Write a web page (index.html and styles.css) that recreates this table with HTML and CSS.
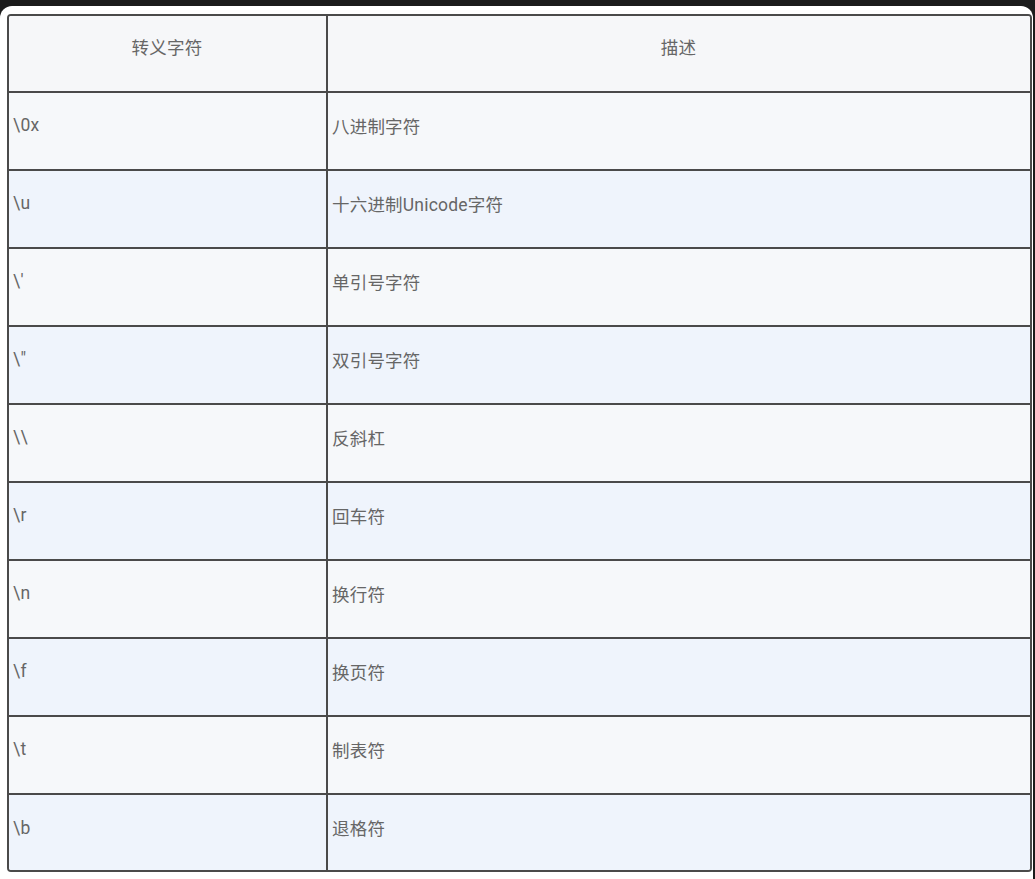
FILE: index.html
```html
<!DOCTYPE html>
<html lang="zh-CN">
<head>
<meta charset="utf-8">
<link rel="stylesheet" href="styles.css">
</head>
<body>
<div class="card">
  <table class="esc">
    <thead>
      <tr><th class="c1">转义字符</th><th class="c2">描述</th></tr>
    </thead>
    <tbody>
      <tr><td>\0x</td><td>八进制字符</td></tr>
      <tr><td>\u</td><td>十六进制Unicode字符</td></tr>
      <tr><td>\'</td><td>单引号字符</td></tr>
      <tr><td>\"</td><td>双引号字符</td></tr>
      <tr><td>\\</td><td>反斜杠</td></tr>
      <tr><td>\r</td><td>回车符</td></tr>
      <tr><td>\n</td><td>换行符</td></tr>
      <tr><td>\f</td><td>换页符</td></tr>
      <tr><td>\t</td><td>制表符</td></tr>
      <tr><td>\b</td><td>退格符</td></tr>
    </tbody>
  </table>
</div>
</body>
</html>
```

FILE: styles.css
```css
html, body {
  margin: 0;
  padding: 0;
  background: #1b1b1b;
}
body {
  padding-top: 6px;
  font-family: Roboto, "Noto Sans CJK SC", sans-serif;
  font-size: 17.5px;
  color: #666;
}
.card {
  background: #fff;
  border-radius: 12px;
  margin-right: 2px;
  height: 885px;
  padding: 8px 0 0 7px;
  box-sizing: border-box;
}
.esc {
  width: 1025px;
  border-collapse: separate;
  border-spacing: 0;
  border: 2px solid #4a4a4a;
  border-radius: 4px;
  overflow: hidden;
}
.esc th, .esc td {
  height: 78px;
  box-sizing: border-box;
  padding: 0 5px 12px 4px;
  vertical-align: middle;
  font-weight: normal;
  border-bottom: 2px solid #4a4a4a;
  text-align: left;
  letter-spacing: 0.2px;
}
.esc tr > :first-child {
  border-right: 2px solid #4a4a4a;
  width: 319px;
}
.esc tbody tr:last-child td {
  border-bottom: none;
  height: 75px;
  padding-bottom: 10px;
}
.esc th {
  height: 77px;
  text-align: center;
  background: #f6f7f9;
  padding-bottom: 14px;
}
.esc tbody tr:nth-child(odd) td {
  background: #f6f8fa;
}
.esc tbody tr:nth-child(even) td {
  background: #eff4fc;
}
```
